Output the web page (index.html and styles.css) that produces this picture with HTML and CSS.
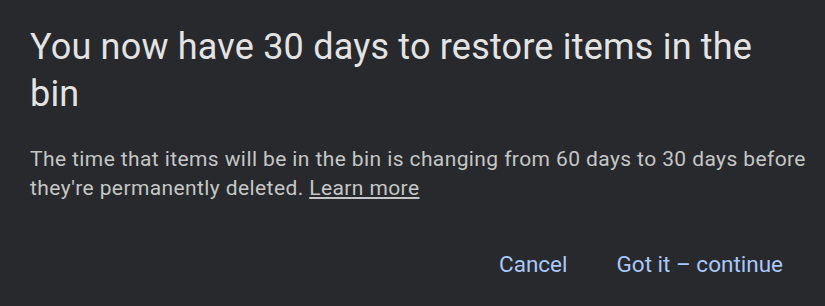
FILE: index.html
```html
<!DOCTYPE html>
<html lang="en">
<head>
    <meta charset="UTF-8">
    <meta name="viewport" content="width=device-width, initial-scale=1.0">
    <title>Bin retention</title>
    <link rel="stylesheet" href="styles.css">
</head>
<body>
    <div class="dialog">
        <h1 class="dialog-title">You now have 30 days to restore items in the bin</h1>
        <p class="dialog-text">
            The time that items will be in the bin is changing from 60 days to 30 days before
            they're permanently deleted. <a href="#">Learn more</a>
        </p>
        <div class="dialog-actions">
            <button class="btn">Cancel</button>
            <button class="btn">Got it – continue</button>
        </div>
    </div>
</body>
</html>
```

FILE: styles.css
```css
body {
    margin: 0;
    font-family: Roboto, "Open Sans", sans-serif;
    background-color: #28292c;
    color: #e3e3e3;
}

.dialog {
    width: 825px;
    height: 306px;
    box-sizing: border-box;
    padding: 24px 30px 0 30px;
    background-color: #28292c;
}

.dialog-title {
    margin: 0;
    font-size: 36px;
    font-weight: 400;
    line-height: 47px;
    letter-spacing: 0.2px;
    width: 760px;
    color: #e3e3e3;
}

.dialog-text {
    margin: 27px 0 0 0;
    font-size: 21px;
    line-height: 29px;
    letter-spacing: 0.4px;
    color: #c4c7c5;
    width: 780px;
}

.dialog-text a {
    color: #c4c7c5;
    text-decoration: underline;
    text-underline-offset: 2px;
}

.dialog-actions {
    display: flex;
    justify-content: flex-end;
    gap: 25px;
    margin-top: 44px;
}

.btn {
    background: none;
    border: none;
    padding: 4px 12px;
    font-family: Roboto, sans-serif;
    font-size: 22.5px;
    color: #a8c7fa;
    cursor: pointer;
}
```
